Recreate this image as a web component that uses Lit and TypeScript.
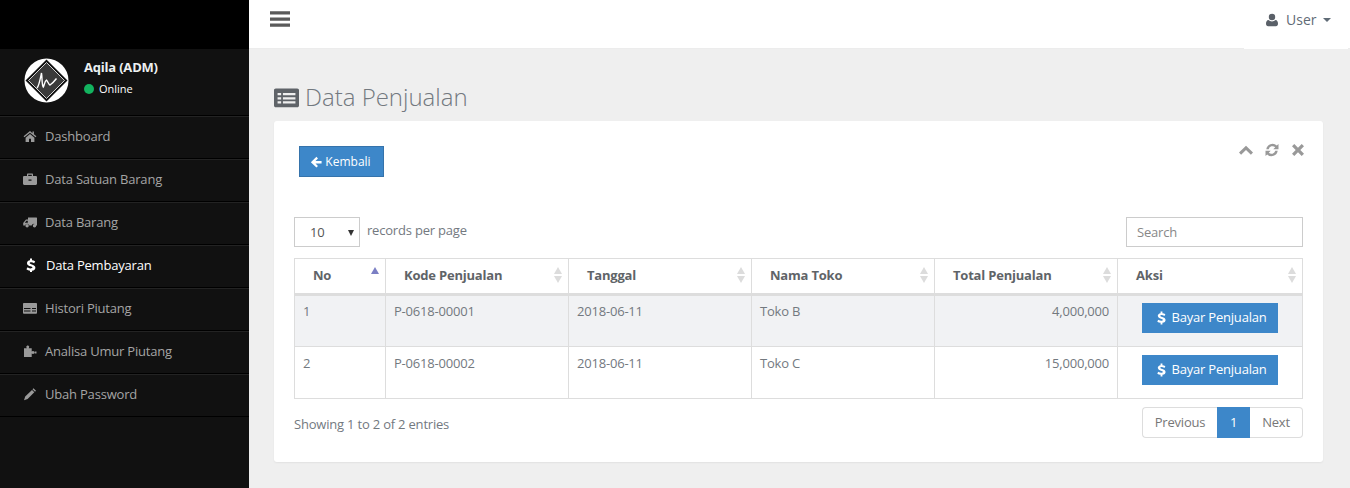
import {LitElement, html, css, svg} from 'lit';
import {customElement} from 'lit/decorators.js';

const icons: Record<string, unknown> = {
  home: svg`<path d="M7 2 .6 7.300l.8 1L7 3.700l5.600 4.600.8-1-2.500-2.100V2.400H9.500v1.900L7 2zM2.600 8.700v4.300h3.400V9.800h2V13h3.400V8.700L7 5.100 2.600 8.700z"/>`,
  briefcase: svg`<path fill-rule="evenodd" d="M5 1.500h4c.6 0 1 .4 1 1V4h2.800c.6 0 1.200.5 1.200 1.200v6.600c0 .7-.6 1.200-1.200 1.200H1.200C.6 13 0 12.500 0 11.800V5.200C0 4.500.6 4 1.200 4H4V2.500c0-.6.4-1 1-1zM5.200 2.800V4h3.600V2.800H5.200zM5.500 7.500v1.300h3V7.500h-3z"/>`,
  truck: svg`<path d="M5 2.500h8.500c.3 0 .5.2.5.5v7.500h-1a2.200 2.200 0 0 0-4.300 0H6.300a2.200 2.200 0 0 0-4.300 0H.2V8L3 4.600h2V2.500zM1.800 7.800h3V5.700H3.400L1.800 7.800zM4.100 9a1.700 1.700 0 1 1 0 3.400 1.700 1.700 0 0 1 0-3.400zm7.400 0a1.700 1.700 0 1 1 0 3.400 1.700 1.700 0 0 1 0-3.400z"/>`,
  dollar: svg`<path d="M6 .5h2v1.800c1.200.1 2.300.5 3.200 1.100L10.100 5.300C9.200 4.700 8.100 4.300 7.100 4.300c-.9 0-1.400.3-1.400.8 0 .6.700.9 2.100 1.300 1.900.6 3.600 1.300 3.600 3.300 0 1.600-1.200 2.800-3.400 3v1.800H6v-1.800c-1.400-.2-2.700-.7-3.600-1.500l1.200-1.900c1 .8 2.200 1.200 3.300 1.200 1 0 1.500-.4 1.500-.9 0-.6-.7-.9-2-1.300C4.900 7.700 3 7.100 3 5.200c0-1.500 1.100-2.600 3-2.900V.5z"/>`,
  list: svg`<path fill-rule="evenodd" d="M1 2h12c.6 0 1 .4 1 1v8.500c0 .6-.4 1-1 1H1c-.6 0-1-.4-1-1V3c0-.6.4-1 1-1zm1 2.500v1.300h2V4.500H2zm3 0v1.300h7V4.500H5zM2 6.800v1.300h2V6.800H2zm3 0v1.300h7V6.800H5zm-3 2.300v1.300h2V9.100H2zm3 0v1.300h7V9.100H5z"/>`,
  rows: svg`<path fill-rule="evenodd" d="M.8 2h12.400c.4 0 .8.400.8.800V12c0 .4-.4.800-.8.800H.8C.4 12.800 0 12.400 0 12V2.800C0 2.400.4 2 .8 2zM1 7v1h6.500V7H1zm8 0v1h4V7H9zM1 9.500v1h6.500v-1H1zm8 0v1h4v-1H9z"/>`,
  puzzle: svg`<path d="M4.500 1.500c1 0 1.700.6 1.700 1.400 0 .5-.5.800-.5 1.300h3v3.200c.4 0 .7-.5 1.200-.5.800 0 1.400.6 1.400 1.500s-.6 1.500-1.400 1.500c-.5 0-.8-.5-1.200-.5V13H1V4.200h2.800c0-.5-.5-.8-.5-1.300 0-.8.700-1.400 1.700-1.400zM11.500 7.500h2v2h-2z"/>`,
  pencil: svg`<path d="M10.500 1.300 13 3.800l-1 1-2.500-2.500 1-1zM9 3 11.300 5.300 4.600 12 1 13.200l1.200-3.600L9 3z"/>`,
  back: svg`<path d="M7.500 1 9.300 2.800 6.400 5.700H13.500v3H6.400l2.900 2.900L7.500 13.500 1 7.200z"/>`,
  user: svg`<path d="M7 .8a3.200 3.200 0 1 1 0 6.400A3.200 3.200 0 0 1 7 .8zM3.500 7.100c.9.800 2.100 1.300 3.500 1.300s2.600-.5 3.500-1.300c1.700.2 2.500 1.600 2.500 3.700 0 1.500-.8 2.400-2.100 2.400H3.100C1.800 13.200 1 12.300 1 10.800c0-2.100.8-3.500 2.500-3.700z"/>`,
  up: svg`<path d="M7 2.800 14 9.600 11.900 11.800 7 7 2.100 11.800 0 9.600z"/>`,
  refresh: svg`<path d="M13.500 1v5.200H8.300l1.900-1.900A3.900 3.900 0 0 0 3.700 6.200H1.300a6.200 6.200 0 0 1 10.500-3.600L13.500 1zM.5 13V7.800h5.200L3.800 9.700a3.900 3.900 0 0 0 6.500-1.900h2.400a6.200 6.200 0 0 1-10.500 3.600L.5 13z"/>`,
  close: svg`<path d="M3.300 1 7 4.700 10.700 1 13 3.300 9.300 7l3.700 3.700-2.300 2.300L7 9.300 3.300 13 1 10.700 4.700 7 1 3.300z"/>`,
  bars: svg`<path d="M0 1.500h14v2.300H0zM0 5.900h14v2.300H0zM0 10.200h14v2.300H0z"/>`,
};

function icon(name: string, cls = '') {
  return html`<svg class="ic ${cls}" viewBox="0 0 14 14" fill="currentColor">${icons[name]}</svg>`;
}

const menu = [
  {label: 'Dashboard', icon: 'home'},
  {label: 'Data Satuan Barang', icon: 'briefcase'},
  {label: 'Data Barang', icon: 'truck'},
  {label: 'Data Pembayaran', icon: 'dollar', active: true},
  {label: 'Histori Piutang', icon: 'rows'},
  {label: 'Analisa Umur Piutang', icon: 'puzzle'},
  {label: 'Ubah Password', icon: 'pencil'},
];

const columns = ['No', 'Kode Penjualan', 'Tanggal', 'Nama Toko', 'Total Penjualan', 'Aksi'];

const rows = [
  ['1', 'P-0618-00001', '2018-06-11', 'Toko B', '4,000,000'],
  ['2', 'P-0618-00002', '2018-06-11', 'Toko C', '15,000,000'],
];

@customElement('app-root')
export class AppRoot extends LitElement {
  static styles = css`
    :host {
      display: grid;
      grid-template-columns: 249px 1fr;
      height: 488px;
      overflow: hidden;
      background: #efefef;
      font-family: 'Open Sans', sans-serif;
      font-size: 13px;
      letter-spacing: -0.2px;
      color: #73879c;
    }
    .ic {
      width: 14px;
      height: 14px;
      flex: none;
      display: block;
    }

    /* sidebar */
    .side {
      background: #111;
      display: flex;
      flex-direction: column;
    }
    .brand {
      height: 49px;
      background: #000;
    }
    .profile {
      height: 66px;
      display: flex;
      align-items: flex-start;
      gap: 15px;
      padding: 9px 0 0 24px;
      box-sizing: border-box;
    }
    .logo {
      width: 45px;
      height: 45px;
      display: block;
    }
    .who {
      font-size: 13px;
      font-weight: 700;
      color: #ecf0f1;
      line-height: 18px;
    }
    .status {
      display: flex;
      align-items: center;
      gap: 5px;
      font-size: 11px;
      letter-spacing: 0;
      color: #fff;
      line-height: 16px;
      margin-top: 5px;
    }
    .dot {
      width: 10px;
      height: 10px;
      border-radius: 50%;
      background: #13b35f;
    }
    .menu a {
      display: flex;
      align-items: center;
      height: 43px;
      box-sizing: border-box;
      padding: 0 0 2px 23px;
      gap: 8px;
      color: #a5a5a5;
      font-size: 13px;
      border-top: 1px solid #000;
      box-shadow: inset 0 1px 0 #232323;
    }
    .menu a:last-child {
      border-bottom: 1px solid #000;
      height: 44px;
    }
    .menu a .ic {
      color: #9a9a9a;
    }
    .menu a.on {
      color: #fff;
      padding-left: 24px;
    }
    .menu a.on .ic {
      color: #fff;
    }

    /* main column */
    .main {
      min-width: 0;
      display: flex;
      flex-direction: column;
    }
    .top {
      height: 48px;
      background: #fff;
      border-bottom: 1px solid #ececec;
      display: flex;
      justify-content: space-between;
      padding: 0 2px 0 21px;
    }
    .burger {
      width: 20px;
      height: 20px;
      color: #5a5a5a;
      margin-top: 9px;
    }
    .user {
      width: 104px;
      height: 49px;
      box-sizing: border-box;
      background: #fff;
      display: flex;
      align-items: flex-start;
      padding: 10px 0 0 21px;
      gap: 7px;
      color: #5f6b76;
      font-size: 14px;
      letter-spacing: 0;
      line-height: 19px;
    }
    .user .ic {
      margin-top: 3px;
      color: #5a6068;
    }
    .caret {
      width: 0;
      height: 0;
      border: 4.500px solid transparent;
      border-top-color: #5f6b76;
      border-bottom: 0;
      margin: 8px 0 0 0;
    }
    .content {
      padding: 0 27px 0 25px;
    }
    h1 {
      display: flex;
      align-items: center;
      gap: 6px;
      height: 32px;
      margin: 32px 0 8px;
      font-size: 24px;
      font-weight: 300;
      letter-spacing: 0;
      color: #73797f;
      line-height: 32px;
    }
    h1 .ic {
      width: 25px;
      height: 25px;
      color: #5f6368;
    }
    .card {
      height: 341px;
      box-sizing: border-box;
      background: #fff;
      border-radius: 3px;
      box-shadow: 0 1px 2px rgba(0, 0, 0, 0.06);
      padding: 25px 20px 0;
    }
    .card-head {
      height: 31px;
      display: flex;
      justify-content: space-between;
      padding: 0 0 0 5px;
      margin-bottom: 40px;
    }
    .btn {
      background: #3d87c9;
      border: 1px solid #2e6da4;
      color: #fff;
      font-family: inherit;
      font-size: 12px;
      letter-spacing: inherit;
      display: flex;
      align-items: center;
      justify-content: center;
      box-sizing: border-box;
    }
    .back {
      width: 85px;
      height: 31px;
      gap: 3px;
      padding: 0 8px 0 6px;
      border-color: #3573ab;
      letter-spacing: 0;
    }
    .back .ic {
      width: 12px;
      height: 12px;
    }
    .tools {
      display: flex;
      gap: 12px;
      color: #999;
      margin: -3px -2px 0 0;
    }
    .controls {
      display: flex;
      justify-content: space-between;
      height: 30px;
      margin-bottom: 11px;
    }
    .length {
      display: flex;
      gap: 7px;
      color: #73797f;
      font-size: 13px;
      line-height: 27px;
    }
    .select {
      width: 66px;
      height: 30px;
      box-sizing: border-box;
      border: 1px solid #ccc;
      display: flex;
      justify-content: space-between;
      align-items: center;
      padding: 1px 5px 0 15px;
      color: #555;
      font-size: 13px;
    }
    .select i {
      width: 0;
      height: 0;
      border: 3.500px solid transparent;
      border-top: 6px solid #333;
      border-bottom: 0;
    }
    .search {
      width: 177px;
      height: 30px;
      box-sizing: border-box;
      border: 1px solid #ccc;
      padding: 0 10px;
      color: #888;
      font-size: 13px;
      line-height: 29px;
    }
    table {
      width: 1008px;
      table-layout: fixed;
      border-collapse: collapse;
      font-size: 13px;
      color: #73797f;
    }
    th,
    td {
      border: 1px solid #ddd;
      box-sizing: border-box;
    }
    th {
      height: 36px;
      border-bottom: 3px solid #ddd;
      font-weight: 700;
      color: #5f6468;
      text-align: left;
      padding: 0 18px 3px;
      position: relative;
    }
    td {
      height: 52px;
      vertical-align: top;
      padding: 7px 8px;
      line-height: 18px;
    }
    tbody tr:first-child td {
      background: #f1f2f4;
      padding-top: 6px;
    }
    td.num {
      text-align: right;
    }
    td.act {
      padding: 8px 0 0 24px;
    }
    tbody tr:first-child td.act {
      padding-top: 7px;
    }
    .pay {
      width: 136px;
      height: 30px;
      gap: 3px;
      font-size: 13px;
      border-color: #3d87c9;
      padding: 0 6px 2px 8px;
    }
    .pay .ic {
      width: 13px;
      height: 15px;
    }
    .sort {
      position: absolute;
      right: 6px;
      top: 8px;
      display: flex;
      flex-direction: column;
      gap: 2px;
    }
    .sort i {
      width: 0;
      height: 0;
      border-left: 4.500px solid transparent;
      border-right: 4.500px solid transparent;
    }
    .sort .u {
      border-bottom: 7px solid #dcdcdc;
    }
    .sort .d {
      border-top: 7px solid #dcdcdc;
    }
    .sort.asc .u {
      border-bottom-color: #7b7fc4;
    }
    .sort.asc .d {
      border-top-color: transparent;
    }
    .foot {
      display: flex;
      justify-content: space-between;
      margin-top: 8px;
    }
    .info {
      color: #73797f;
      font-size: 13px;
      line-height: 34px;
    }
    .pager {
      display: flex;
      height: 31px;
      font-size: 13px;
      color: #777;
      line-height: 29px;
    }
    .pager span {
      border: 1px solid #ddd;
      box-sizing: border-box;
      text-align: center;
    }
    .pager .prev {
      width: 75px;
      border-right: 0;
      border-radius: 4px 0 0 4px;
    }
    .pager .cur {
      width: 33px;
      background: #3d87c9;
      border-color: #3d87c9;
      color: #fff;
    }
    .pager .next {
      width: 53px;
      border-left: 0;
      border-radius: 0 4px 4px 0;
    }
  `;

  render() {
    return html`
      <aside class="side">
        <div class="brand"></div>
        <div class="profile">
          <svg class="logo" viewBox="0 0 45 45">
            <circle cx="22.500" cy="22.500" r="22" fill="#fff"/>
            <path d="M22.500 1.500 43.500 22.500 22.500 43.500 1.500 22.500z" fill="#111"/>
            <path d="M22.500 4.500 40.500 22.500 22.500 40.500 4.500 22.500z" fill="#3a3a3a" stroke="#fff" stroke-width="0.800"/>
            <path d="M13 30c2-2 3-8 4.500-15 .8 5 .2 12 1.800 14 1-2 1.500-6 3.200-7 1.200 1 2 4.500 3.500 5 1.500-1 3-2 6.500-6.500" fill="none" stroke="#fff" stroke-width="1.400"/>
          </svg>
          <div>
            <div class="who">Aqila (ADM)</div>
            <div class="status"><span class="dot"></span>Online</div>
          </div>
        </div>
        <nav class="menu">
          ${menu.map(m => html`<a class=${m.active ? 'on' : ''}>${icon(m.icon)}<span>${m.label}</span></a>`)}
        </nav>
      </aside>
      <div class="main">
        <header class="top">
          ${icon('bars', 'burger')}
          <div class="user">${icon('user')}<span>User</span><i class="caret"></i></div>
        </header>
        <div class="content">
          <h1>${icon('list')}Data Penjualan</h1>
          <section class="card">
            <div class="card-head">
              <button class="btn back">${icon('back')}Kembali</button>
              <div class="tools">${icon('up')}${icon('refresh')}${icon('close')}</div>
            </div>
            <div class="controls">
              <div class="length">
                <div class="select">10<i></i></div>
                records per page
              </div>
              <div class="search">Search</div>
            </div>
            <table>
              <colgroup>
                <col style="width:91px"><col style="width:183px"><col style="width:183px">
                <col style="width:183px"><col style="width:183px"><col style="width:185px">
              </colgroup>
              <thead>
                <tr>
                  ${columns.map((c, i) => html`<th>${c}<span class="sort ${i === 0 ? 'asc' : ''}"><i class="u"></i><i class="d"></i></span></th>`)}
                </tr>
              </thead>
              <tbody>
                ${rows.map(r => html`
                  <tr>
                    <td>${r[0]}</td>
                    <td>${r[1]}</td>
                    <td>${r[2]}</td>
                    <td>${r[3]}</td>
                    <td class="num">${r[4]}</td>
                    <td class="act"><button class="btn pay">${icon('dollar')}Bayar Penjualan</button></td>
                  </tr>
                `)}
              </tbody>
            </table>
            <div class="foot">
              <div class="info">Showing 1 to 2 of 2 entries</div>
              <div class="pager">
                <span class="prev">Previous</span>
                <span class="cur">1</span>
                <span class="next">Next</span>
              </div>
            </div>
          </section>
        </div>
      </div>
    `;
  }
}
